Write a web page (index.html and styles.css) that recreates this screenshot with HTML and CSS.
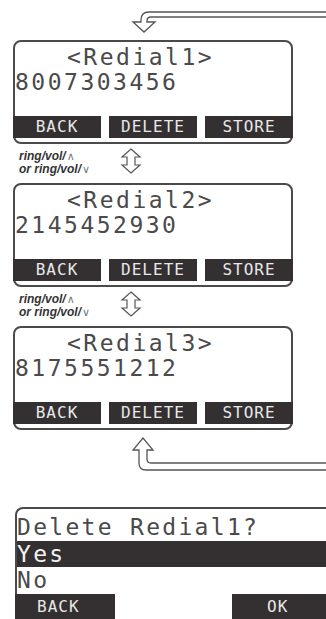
FILE: index.html
```
<!DOCTYPE html>
<html lang="en">
<head>
    <meta charset="UTF-8">
    <meta name="viewport" content="width=device-width, initial-scale=1.0">
    <title>Redial List</title>
    <link rel="stylesheet" href="styles.css">
</head>
<body>

<svg class="flow-arrow top" width="326" height="40" viewBox="0 0 326 40">
    <path d="M330 12 H149 Q141 12 141 20 V22 H133 L144 32 L155 22 H147 V21 Q147 17 151 17 H330" />
</svg>

<div class="screen">
    <div class="title">&lt;Redial1&gt;</div>
    <div class="number">8007303456</div>
    <div class="softkeys">
        <span>BACK</span>
        <span>DELETE</span>
        <span>STORE</span>
    </div>
</div>

<div class="step">
    <div class="keys">
        <div>ring/vol/<span class="sym">&and;</span></div>
        <div>or ring/vol/<span class="sym">&or;</span></div>
    </div>
    <svg class="updown" width="22" height="26" viewBox="0 0 22 26">
        <path d="M11 1 L20 9 H15 V17 H20 L11 25 L2 17 H7 V9 H2 Z" />
    </svg>
</div>

<div class="screen">
    <div class="title">&lt;Redial2&gt;</div>
    <div class="number">2145452930</div>
    <div class="softkeys">
        <span>BACK</span>
        <span>DELETE</span>
        <span>STORE</span>
    </div>
</div>

<div class="step">
    <div class="keys">
        <div>ring/vol/<span class="sym">&and;</span></div>
        <div>or ring/vol/<span class="sym">&or;</span></div>
    </div>
    <svg class="updown" width="22" height="26" viewBox="0 0 22 26">
        <path d="M11 1 L20 9 H15 V17 H20 L11 25 L2 17 H7 V9 H2 Z" />
    </svg>
</div>

<div class="screen">
    <div class="title">&lt;Redial3&gt;</div>
    <div class="number">8175551212</div>
    <div class="softkeys">
        <span>BACK</span>
        <span>DELETE</span>
        <span>STORE</span>
    </div>
</div>

<svg class="flow-arrow bottom" width="326" height="77" viewBox="0 0 326 77">
    <path d="M330 33 H151 Q147 33 147 29 V20 H153 L143 8 L133 20 H139 V33 Q139 40 146 40 H330" />
</svg>

<div class="dialog">
    <div class="question">Delete Redial1?</div>
    <div class="option selected">Yes</div>
    <div class="option">No</div>
    <div class="dialog-keys">
        <span class="key-back">BACK</span>
        <span class="key-ok">OK</span>
    </div>
</div>

</body>
</html>
```

FILE: styles.css
```
body {
    margin: 0;
    padding: 0;
    width: 326px;
    height: 619px;
    overflow: hidden;
    background: #fff;
    color: #4a4a4a;
    font-family: "DejaVu Sans Mono", "Liberation Mono", monospace;
}
.flow-arrow {
    display: block;
}
.flow-arrow path {
    fill: none;
    stroke: #555;
    stroke-width: 1.3;
}
.screen {
    margin-left: 13px;
    width: 280px;
    height: 104px;
    box-sizing: border-box;
    border: 2px solid #4a4a4a;
    border-radius: 8px;
    padding-top: 3px;
    font-size: 23px;
    letter-spacing: 2.5px;
    line-height: 25px;
}
.title {
    padding-left: 52px;
}
.number {
    padding-left: 0;
}
.softkeys {
    display: grid;
    grid-template-columns: 1fr 1fr 1fr;
    gap: 8px;
    margin: 21px -2px 0;
    letter-spacing: 1px;
}
.softkeys span,
.dialog-keys span {
    background: #343031;
    color: #e8e8e8;
    font-size: 16px;
    letter-spacing: 1px;
    line-height: 22px;
    height: 22px;
    text-align: center;
}
.step {
    display: flex;
    height: 39px;
}
.keys {
    width: 116px;
    padding: 6px 0 0 19px;
    box-sizing: border-box;
    font-family: "Liberation Sans", Arial, sans-serif;
    font-weight: bold;
    font-style: italic;
    font-size: 12px;
    line-height: 12px;
    color: #333;
}
.sym {
    font-family: "DejaVu Sans", sans-serif;
    font-style: normal;
    font-weight: normal;
    font-size: 11px;
    color: #777;
    margin-left: 1px;
}
.updown {
    margin-top: 4px;
    margin-left: 4px;
}
.updown path {
    fill: #fff;
    stroke: #555;
    stroke-width: 1.2;
}
.dialog {
    margin-left: 15px;
    width: 311px;
    box-sizing: border-box;
    border: 2px solid #4a4a4a;
    border-right: none;
    border-bottom: none;
    border-top-left-radius: 8px;
    font-size: 23px;
    letter-spacing: 2.3px;
}
.question {
    padding: 4px 0 0 0;
    line-height: 28px;
}
.option {
    line-height: 26px;
    height: 26px;
}
.option.selected {
    background: #343031;
    color: #f2f2f2;
}
.dialog-keys {
    display: flex;
    justify-content: space-between;
    margin: 1px 0 0 -2px;
}
.dialog-keys span {
    height: 26px;
    line-height: 26px;
    text-align: left;
}
.key-back {
    width: 100px;
    padding-left: 22px;
    box-sizing: border-box;
}
.key-ok {
    width: 94px;
    padding-left: 35px;
    box-sizing: border-box;
}
```
